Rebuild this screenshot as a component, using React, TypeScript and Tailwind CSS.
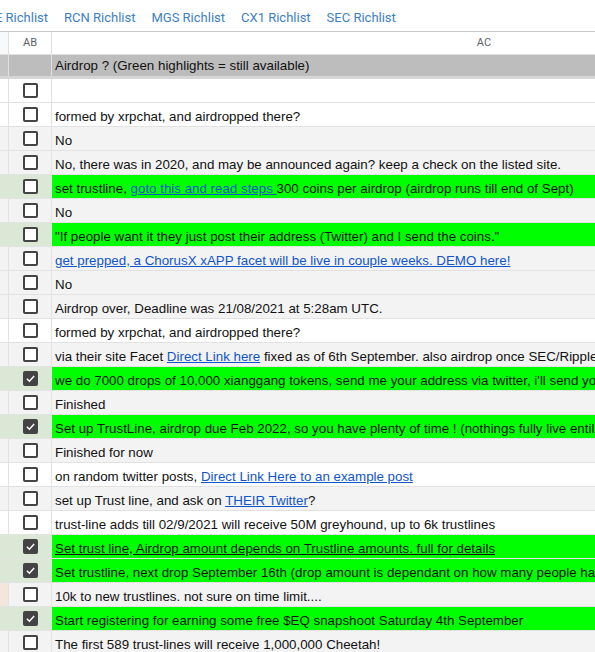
import { ReactNode } from 'react';

type Row = {
  text: ReactNode;
  bg: 'white' | 'gray' | 'green';
  checked?: boolean;
  strip?: string;
};

const Link = ({ children }: { children: ReactNode }) => (
  <span className="text-[#1155cc] underline">{children}</span>
);

const rows: Row[] = [
  { text: '', bg: 'white' },
  { text: 'formed by xrpchat, and airdropped there?', bg: 'white' },
  { text: 'No', bg: 'gray' },
  { text: 'No, there was in 2020, and may be announced again? keep a check on the listed site.', bg: 'gray' },
  {
    text: (
      <>
        set trustline, <Link>goto this and read steps </Link>300 coins per airdrop (airdrop runs till end of Sept)
      </>
    ),
    bg: 'green',
  },
  { text: 'No', bg: 'gray' },
  { text: '"If people want it they just post their address (Twitter) and I send the coins."', bg: 'green' },
  { text: <Link>get prepped, a ChorusX xAPP facet will be live in couple weeks. DEMO here!</Link>, bg: 'gray' },
  { text: 'No', bg: 'gray' },
  { text: 'Airdrop over, Deadline was 21/08/2021 at 5:28am UTC.', bg: 'gray' },
  { text: 'formed by xrpchat, and airdropped there?', bg: 'white' },
  {
    text: (
      <>
        via their site Facet <Link>Direct Link here</Link> fixed as of 6th September. also airdrop once SEC/Ripple case is over
      </>
    ),
    bg: 'gray',
  },
  {
    text: "we do 7000 drops of 10,000 xianggang tokens, send me your address via twitter, i'll send you the tokens",
    bg: 'green',
    checked: true,
  },
  { text: 'Finished', bg: 'gray' },
  {
    text: 'Set up TrustLine, airdrop due Feb 2022, so you have plenty of time ! (nothings fully live entil then)',
    bg: 'green',
    checked: true,
  },
  { text: 'Finished for now', bg: 'gray' },
  {
    text: (
      <>
        on random twitter posts, <Link>Direct Link Here to an example post</Link>
      </>
    ),
    bg: 'white',
  },
  {
    text: (
      <>
        set up Trust line, and ask on <Link>THEIR Twitter</Link>?
      </>
    ),
    bg: 'gray',
  },
  { text: 'trust-line adds till 02/9/2021 will receive 50M greyhound, up to 6k trustlines', bg: 'white' },
  {
    text: <span className="underline">Set trust line, Airdrop amount depends on Trustline amounts. full for details</span>,
    bg: 'green',
    checked: true,
  },
  {
    text: 'Set trustline, next drop September 16th (drop amount is dependant on how many people have set trustline)',
    bg: 'green',
    checked: true,
  },
  { text: '10k to new trustlines. not sure on time limit....', bg: 'gray', strip: 'bg-[#f3e7dc]' },
  {
    text: 'Start registering for earning some free $EQ snapshoot Saturday 4th September',
    bg: 'green',
    checked: true,
  },
  { text: 'The first 589 trust-lines will receive 1,000,000 Cheetah!', bg: 'gray' },
];

const acBg = { white: 'bg-white', gray: 'bg-[#f3f3f3]', green: 'bg-[#00ff00]' };
const abBg = { white: 'bg-white', gray: 'bg-[#f3f3f3]', green: 'bg-[#dbe8d5]' };

function Checkbox({ checked }: { checked?: boolean }) {
  if (checked) {
    return (
      <div className="w-[15px] h-[15px] rounded-[2px] bg-[#444] flex items-center justify-center">
        <svg width="11" height="11" viewBox="0 0 12 12" fill="none">
          <path d="M2 6.2 L4.8 9 L10 3.2" stroke="#fff" strokeWidth="1.6" />
        </svg>
      </div>
    );
  }
  return <div className="w-[15px] h-[15px] rounded-[2px] border-2 border-[#444] bg-white" />;
}

export default function App() {
  return (
    <div className="w-[595px] h-[652px] overflow-hidden bg-white font-['Liberation_Sans',Arial,sans-serif] text-[13.33px] text-[#111]">
      <div className="h-[31px] pt-[4px] flex items-center gap-4 -ml-[5px] font-['Roboto','Liberation_Sans',sans-serif] text-[13px] text-[#3d7fc6] whitespace-nowrap">
        <span>E Richlist</span>
        <span>RCN Richlist</span>
        <span>MGS Richlist</span>
        <span>CX1 Richlist</span>
        <span>SEC Richlist</span>
      </div>

      <div className="w-[920px] border-t border-[#c8c8c8]">
        {/* column headers */}
        <div className="flex h-[23px] border-b border-[#e0e0e0]">
          <div className="w-[9px] bg-[#f8f9fa] border-r border-[#e0e0e0]" />
          <div className="w-[43px] flex items-center justify-center border-r border-[#e0e0e0] text-[11px] text-[#5f6368] font-['Roboto',sans-serif]">
            AB
          </div>
          <div className="w-[864px] flex items-center justify-center text-[11px] text-[#5f6368] font-['Roboto',sans-serif]">
            AC
          </div>
        </div>

        {/* title row */}
        <div className="flex h-[21px] bg-[#bdbdbd]">
          <div className="w-[9px] bg-[#c4c4c4] border-r border-[#e0e0e0]" />
          <div className="w-[43px] border-r border-[#e0e0e0]" />
          <div className="w-[864px] px-[3px] flex items-end pb-[2px] leading-[17px] whitespace-nowrap">
            Airdrop ? (Green highlights = still available)
          </div>
        </div>
        <div className="h-[3px] bg-[#d6d6d6]" />

        {rows.map((row, i) => (
          <div key={i} className="flex h-[24px] border-b border-[#e2e2e2]">
            <div className={`w-[9px] border-r border-[#e2e2e2] ${row.strip ?? abBg[row.bg]}`} />
            <div className={`w-[43px] flex items-center justify-center border-r border-[#e2e2e2] ${abBg[row.bg]}`}>
              <Checkbox checked={row.checked} />
            </div>
            <div
              className={`w-[864px] px-[3px] flex items-end pb-[1px] leading-[17px] whitespace-nowrap overflow-hidden ${acBg[row.bg]}`}
            >
              <span>{row.text}</span>
            </div>
          </div>
        ))}
      </div>
    </div>
  );
}
